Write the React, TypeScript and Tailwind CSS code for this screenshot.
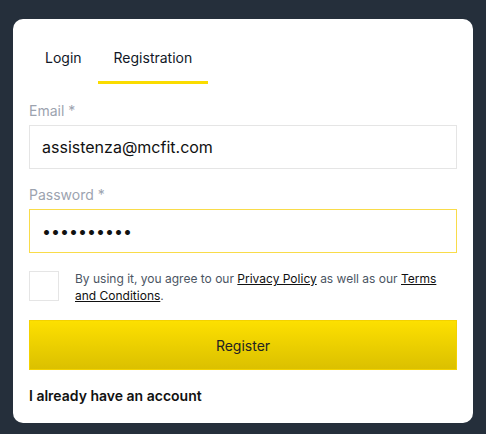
import { useState } from 'react';

export default function App() {
	const [tab, setTab] = useState<'login' | 'register'>('register');
	const [email, setEmail] = useState('assistenza@mcfit.com');
	const [password, setPassword] = useState('1234567890');
	const [agreed, setAgreed] = useState(false);

	return (
		<div className="min-h-[434px] w-full bg-[#252f3b] pt-[19px] px-[13px] font-['Inter',sans-serif]">
			<div className="w-[460px] rounded-[10px] bg-white px-4 pt-4 pb-[17px]">
				<div className="flex">
					<button
						onClick={() => setTab('login')}
						className={`px-4 pt-[13px] pb-[13px] border-b-[3px] text-[14px] leading-5 text-[#111827] ${
							tab === 'login' ? 'border-[#fadc00]' : 'border-transparent'
						}`}>
						Login
					</button>
					<button
						onClick={() => setTab('register')}
						className={`px-4 pt-[13px] pb-[13px] border-b-[3px] text-[14px] leading-5 text-[#111827] ${
							tab === 'register' ? 'border-[#fadc00]' : 'border-transparent'
						}`}>
						Registration
					</button>
				</div>

				<div className="mt-[17px] flex flex-col">
					<label className="text-[14px] leading-5 text-[#9ca3af] mb-1">Email *</label>
					<input
						value={email}
						onChange={(e) => setEmail(e.target.value)}
						className="h-[44px] w-full border border-[#e5e5e5] px-3 text-[16px] text-[#111] outline-none"
					/>
				</div>

				<div className="mt-4 flex flex-col">
					<label className="text-[14px] leading-5 text-[#9ca3af] mb-1">Password *</label>
					<input
						type="password"
						value={password}
						onChange={(e) => setPassword(e.target.value)}
						className="h-[44px] w-full border border-[#f9dc4a] px-3 text-[16px] text-[#111] outline-none"
					/>
				</div>

				<div className="mt-[18px] flex items-start gap-4">
					<button
						onClick={() => setAgreed(!agreed)}
						className="w-[30px] h-[30px] shrink-0 border border-[#e5e5e5] bg-white flex items-center justify-center text-[14px]">
						{agreed ? '✓' : ''}
					</button>
					<p className="text-[12px] leading-[17px] text-[#4b5563] -mt-px">
						By using it, you agree to our{' '}
						<a href="#" className="underline text-[#111]">Privacy Policy</a> as well as our{' '}
						<a href="#" className="underline text-[#111]">Terms and Conditions</a>.
					</p>
				</div>

				<button className="mt-4 h-[50px] w-full border border-[#f3d200] bg-gradient-to-b from-[#fde000] to-[#dbc000] text-[14px] text-[#222]">
					Register
				</button>

				<p className="mt-4 text-[14px] leading-5 font-semibold text-[#111]">I already have an account</p>
			</div>
		</div>
	);
}
